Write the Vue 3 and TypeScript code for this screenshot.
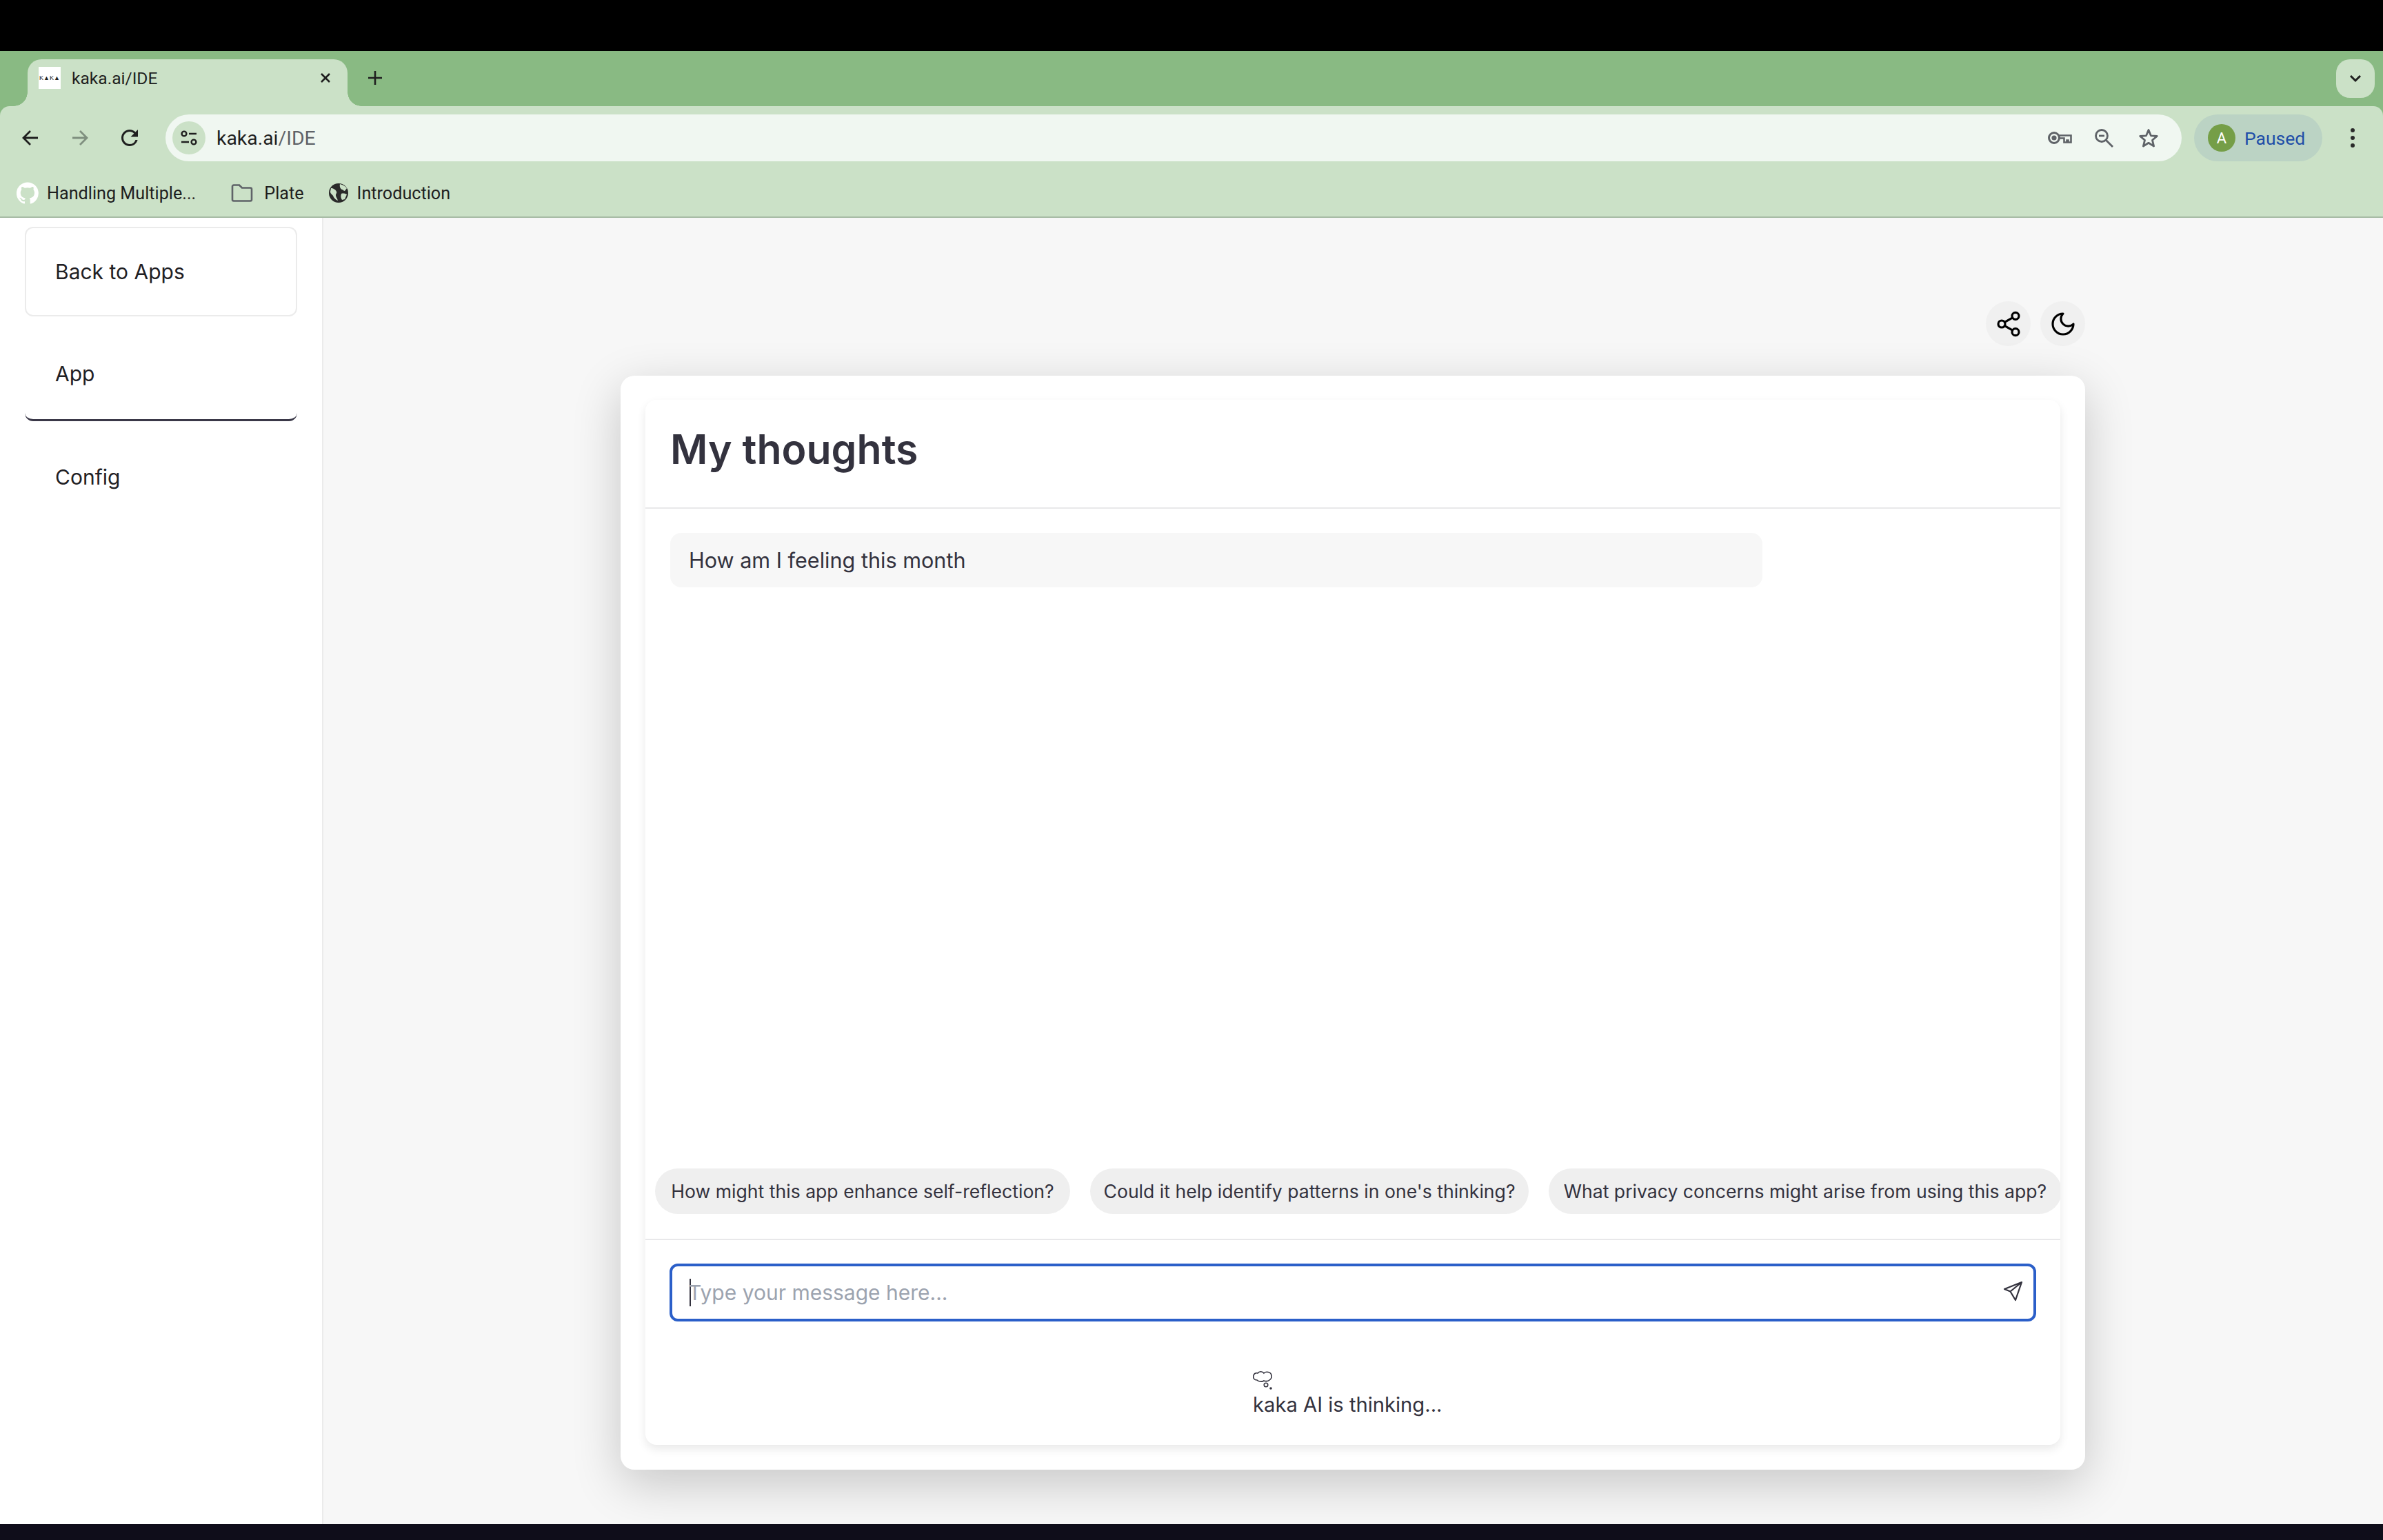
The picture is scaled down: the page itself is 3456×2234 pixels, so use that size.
<script setup lang="ts">
interface Suggestion {
  text: string
  width: number
}

const navItems: string[] = ['App', 'Config']
const suggestions: Suggestion[] = [
  { text: 'How might this app enhance self-reflection?', width: 602 },
  { text: "Could it help identify patterns in one's thinking?", width: 636 },
  { text: 'What privacy concerns might arise from using this app?', width: 744 },
]
</script>

<template>
  <div class="page">
    <div class="top-black"></div>

    <div class="tabstrip">
      <div class="tab">
        <span class="favicon">K▲K▲</span>
        <span class="tab-title">kaka.ai/IDE</span>
        <svg class="tab-close" width="16" height="16" viewBox="0 0 16 16"><path d="M2 2l12 12M14 2L2 14" stroke="#1f1f1f" stroke-width="2.6" fill="none"/></svg>
      </div>
      <svg class="new-tab" width="22" height="22" viewBox="0 0 22 22"><path d="M11 1v20M1 11h20" stroke="#1f1f1f" stroke-width="2.6" fill="none"/></svg>
      <div class="tab-menu">
        <svg width="18" height="12" viewBox="0 0 18 12"><path d="M2 2l7 7 7-7" stroke="#1f1f1f" stroke-width="3" fill="none"/></svg>
      </div>
    </div>

    <div class="toolbar">
      <div class="nav-row">
        <svg class="nav-icon" width="24" height="24" viewBox="0 0 24 24"><path d="M23 12H3M12 2L2 12l10 10" stroke="#1f1f1f" stroke-width="2.8" fill="none"/></svg>
        <svg class="nav-icon dim" width="24" height="24" viewBox="0 0 24 24"><path d="M1 12h20M12 2l10 10-10 10" stroke="#7f8f7f" stroke-width="2.8" fill="none"/></svg>
        <svg class="nav-icon" width="24" height="24" viewBox="4 4 16 16"><path fill="#1f1f1f" d="M17.65 6.35A7.958 7.958 0 0 0 12 4c-4.42 0-7.99 3.58-7.99 8s3.57 8 7.99 8c3.73 0 6.84-2.55 7.73-6h-2.08A5.99 5.99 0 0 1 12 18c-3.31 0-6-2.69-6-6s2.69-6 6-6c1.66 0 3.14.69 4.22 1.78L13 11h7V4l-2.35 2.35z"/></svg>
        <div class="omnibox">
          <span class="site-info">
            <svg width="24" height="22" viewBox="0 0 24 22"><circle cx="5" cy="5" r="3.4" stroke="#1f1f1f" stroke-width="2.4" fill="none"/><path d="M12 5h11M1 17h11" stroke="#1f1f1f" stroke-width="2.4"/><circle cx="19" cy="17" r="3.4" stroke="#1f1f1f" stroke-width="2.4" fill="none"/></svg>
          </span>
          <span class="url"><span class="url-host">kaka.ai</span><span class="url-path">/IDE</span></span>
          <span class="omni-icons">
            <svg width="36" height="20" viewBox="0 0 36 20"><circle cx="10" cy="10" r="7.5" stroke="#5f6368" stroke-width="3" fill="none"/><circle cx="10" cy="10" r="3.6" fill="#5f6368"/><path d="M17 6.5h17.5v10h-4v-3h-2v3h-4v-6H17" stroke="#5f6368" stroke-width="2.6" fill="none"/></svg>
            <svg class="zoom-icon" width="28" height="28" viewBox="0 0 28 28"><circle cx="11" cy="11" r="8.5" stroke="#5f6368" stroke-width="2.8" fill="none"/><path d="M7 11h8" stroke="#5f6368" stroke-width="2.8"/><path d="M17 17l10 10" stroke="#5f6368" stroke-width="2.8"/></svg>
            <svg width="30" height="30" viewBox="0 0 30 30"><path d="M15 3.5l3.4 8.3 8.9.7-6.8 5.8 2.1 8.7-7.6-4.7-7.6 4.7 2.1-8.7-6.8-5.8 8.9-.7z" stroke="#5f6368" stroke-width="2.8" fill="none" stroke-linejoin="round"/></svg>
          </span>
        </div>
        <div class="profile">
          <span class="avatar">A</span>
          <span class="paused">Paused</span>
        </div>
        <svg class="kebab" width="8" height="30" viewBox="0 0 8 30"><circle cx="4" cy="4" r="3" fill="#2a2a2a"/><circle cx="4" cy="15" r="3" fill="#2a2a2a"/><circle cx="4" cy="26" r="3" fill="#2a2a2a"/></svg>
      </div>

      <div class="bookmarks">
        <span class="bookmark first">
          <svg width="32" height="32" viewBox="0 0 24 24"><path fill="#fff" d="M12 .3a12 12 0 0 0-3.8 23.4c.6.1.8-.3.8-.6v-2c-3.3.7-4-1.6-4-1.6-.6-1.4-1.4-1.8-1.4-1.8-1-.7.1-.7.1-.7 1.2.1 1.8 1.2 1.8 1.2 1 1.8 2.8 1.3 3.5 1 .1-.8.4-1.3.8-1.6-2.7-.3-5.5-1.3-5.5-5.9 0-1.3.5-2.4 1.2-3.2-.1-.3-.5-1.5.1-3.2 0 0 1-.3 3.3 1.2a11.5 11.5 0 0 1 6 0c2.3-1.5 3.3-1.2 3.3-1.2.6 1.7.2 2.9.1 3.2.8.8 1.2 1.9 1.2 3.2 0 4.6-2.8 5.6-5.5 5.9.4.4.8 1.1.8 2.2v3.3c0 .3.2.7.8.6A12 12 0 0 0 12 .3"/></svg>
          <span class="bm-label">Handling Multiple...</span>
        </span>
        <span class="bookmark second">
          <svg width="32" height="28" viewBox="0 0 32 28"><path d="M2 4.5a2 2 0 0 1 2-2h8l4 4h12a2 2 0 0 1 2 2V23.5a2 2 0 0 1-2 2H4a2 2 0 0 1-2-2z" stroke="#5f6368" stroke-width="2.6" fill="none"/></svg>
          <span class="bm-label">Plate</span>
        </span>
        <span class="bookmark third">
          <svg width="30" height="30" viewBox="0 0 30 30"><circle cx="15" cy="15" r="14" fill="#2a2a2a"/><path d="M4 8c3 0 7 2 8 5 1 2-1 3-1 5 0 3 2 4 3 8-3-1-6-4-7-7-1-2-4-3-4-6zM17 2c4 1 8 3 10 6l-3 4c-2 0-2-2-4-2-2-1-4-4-3-8zM19 16c3-1 6 0 8 1l-3 7-4 1c-2-3-2-6-1-9z" fill="#cbe1c7"/></svg>
          <span class="bm-label">Introduction</span>
        </span>
      </div>
    </div>

    <div class="workspace">
      <aside class="sidebar">
        <div class="back-link">Back to Apps</div>
        <div
          v-for="(item, i) in navItems"
          :key="item"
          class="nav-item"
          :class="{ active: i === 0 }"
        >{{ item }}</div>
      </aside>

      <main class="content">
        <div class="actions">
          <button class="round-btn">
            <svg width="40" height="40" viewBox="0 0 24 24" fill="none" stroke="#000" stroke-width="1.9" stroke-linecap="round" stroke-linejoin="round"><circle cx="18" cy="5" r="3"/><circle cx="6" cy="12" r="3"/><circle cx="18" cy="19" r="3"/><path d="M8.59 13.51l6.83 3.98M15.41 6.51l-6.82 3.98"/></svg>
          </button>
          <button class="round-btn">
            <svg width="40" height="40" viewBox="0 0 24 24" fill="none" stroke="#000" stroke-width="1.9" stroke-linecap="round" stroke-linejoin="round"><path d="M12 3a6 6 0 0 0 9 9 9 9 0 1 1-9-9Z"/></svg>
          </button>
        </div>

        <section class="outer-card">
          <div class="chat-card">
            <header class="chat-header"><h1>My thoughts</h1></header>

            <div class="messages">
              <div class="bubble">How am I feeling this month</div>
            </div>

            <div class="suggestions">
              <span
                v-for="s in suggestions"
                :key="s.text"
                class="chip"
                :style="{ width: s.width + 'px' }"
              >{{ s.text }}</span>
            </div>

            <div class="composer">
              <div class="input">
                <span class="caret"></span>
                <span class="placeholder">Type your message here...</span>
                <svg class="send" width="30" height="30" viewBox="0 0 30 30"><path d="M28 2L3 12l8.5 3.5L19 28zM28 2L11.5 15.5" stroke="#33323e" stroke-width="2.2" fill="none" stroke-linejoin="round"/></svg>
              </div>
            </div>

            <div class="thinking">
              <svg class="cloud" width="28" height="28" viewBox="0 0 28 28"><path d="M7 4c2-3 7-3 9 0 3-3 10-2 11 3 1 3-1 6-3 7-2 2-6 2-8 1-3 2-8 1-10-1-4 0-6-3-5-6 0-3 3-5 6-4z" stroke="#33323e" stroke-width="1.6" fill="none"/><circle cx="19" cy="21" r="2.8" stroke="#33323e" stroke-width="1.5" fill="none"/><circle cx="26" cy="26" r="1.8" fill="#33323e"/></svg>
              <div class="thinking-text">kaka AI is thinking...</div>
            </div>
          </div>
        </section>
      </main>
    </div>

    <div class="bottom-bar"></div>
  </div>
</template>

<style>
html, body { margin: 0; padding: 0; background: #000; }
</style>

<style scoped>
.page {
  width: 3456px;
  height: 2234px;
  display: flex;
  flex-direction: column;
  overflow: hidden;
  background: #89ba83;
  font-family: "Inter", "Liberation Sans", sans-serif;
  color: #1f1f1f;
}
.top-black { height: 74px; background: #000; flex: none; }

/* Browser chrome */
.tabstrip {
  height: 80px;
  flex: none;
  background: #89ba83;
  display: flex;
  align-items: flex-start;
  padding: 12px 12px 0 40px;
  box-sizing: border-box;
}
.tab {
  position: relative;
  width: 464px;
  height: 68px;
  background: #cbe1c7;
  border-radius: 20px 20px 0 0;
  display: flex;
  align-items: center;
  padding: 0 24px 14px 16px;
  box-sizing: border-box;
}
.tab::before, .tab::after {
  content: "";
  position: absolute;
  bottom: 0;
  width: 20px;
  height: 20px;
  background: radial-gradient(circle at 100% 0, #89ba83 19.5px, #cbe1c7 20px);
}
.tab::after { right: -20px; }
.tab::before { left: -20px; transform: scaleX(-1); }
.favicon {
  width: 32px;
  height: 32px;
  background: #fff;
  font: 400 9px "Liberation Sans", sans-serif;
  color: #222;
  display: flex;
  align-items: center;
  justify-content: center;
  flex: none;
}
.tab-title {
  margin-left: 16px;
  font: 400 24.6px "Roboto", sans-serif;
  flex: 1;
  color: #1f1f1f;
}
.tab-close { flex: none; }
.new-tab { margin: 16px 0 0 29px; flex: none; }
.tab-menu {
  margin-left: auto;
  width: 56px;
  height: 56px;
  border-radius: 20px;
  background: #cbe1c7;
  display: flex;
  align-items: center;
  justify-content: center;
}
.toolbar {
  height: 162px;
  flex: none;
  box-sizing: border-box;
  background: #cbe1c7;
  border-bottom: 2px solid #a7bba5;
  border-radius: 14px 14px 0 0;
  padding-top: 12px;
}
.nav-row {
  display: flex;
  align-items: center;
  height: 68px;
  padding-left: 32px;
}
.nav-icon { flex: none; margin-right: 48px; }
.omnibox {
  margin-left: -8px;
  width: 2924px;
  height: 68px;
  border-radius: 34px;
  background: #f0f7f1;
  display: flex;
  align-items: center;
  padding: 0 33px 0 10px;
  box-sizing: border-box;
  flex: none;
}
.site-info {
  width: 48px;
  height: 48px;
  border-radius: 50%;
  background: #cbe1c7;
  display: flex;
  align-items: center;
  justify-content: center;
  flex: none;
}
.url { margin-left: 16px; font: 400 28.4px "Roboto", sans-serif; }
.url-host { color: #1f1f1f; }
.url-path { color: #5f6368; }
.omni-icons { margin-left: auto; display: flex; align-items: center; gap: 32px; }
.zoom-icon { margin-right: 4px; }
.profile {
  margin-left: 18px;
  width: 186px;
  height: 68px;
  border-radius: 34px;
  background: #bbd3c4;
  display: flex;
  align-items: center;
  padding-left: 20px;
  box-sizing: border-box;
  flex: none;
}
.avatar {
  width: 40px;
  height: 40px;
  border-radius: 50%;
  background: #759e47;
  color: #fff;
  font: 400 22px "Roboto", sans-serif;
  display: flex;
  align-items: center;
  justify-content: center;
}
.paused { margin-left: 13px; color: #1f4ea8; font: 400 26.5px "Roboto", sans-serif; }
.kebab { margin-left: 40px; flex: none; }
.bookmarks {
  display: flex;
  align-items: center;
  height: 36px;
  margin-top: 28px;
  padding-left: 24px;
  font: 400 25.2px "Roboto", sans-serif;
  color: #1f1f1f;
}
.bookmark { display: flex; align-items: center; }
.bm-label { margin-left: 12px; }
.bookmark.second { margin-left: 51px; }
.bookmark.second .bm-label { margin-left: 16px; }
.bookmark.third { margin-left: 35px; }

/* Application */
.workspace { flex: 1; min-height: 0; display: flex; }
.sidebar {
  width: 469px;
  flex: none;
  box-sizing: border-box;
  background: #fff;
  border-right: 2px solid #ebebeb;
  padding: 13px 36px 0;
  color: #1f2024;
  font-size: 30px;
}
.back-link, .nav-item {
  height: 130px;
  width: 395px;
  box-sizing: border-box;
  border-radius: 12px;
  padding-left: 44px;
  display: flex;
  align-items: center;
  margin-bottom: 20px;
}
.back-link { border: 2px solid #ebebeb; padding-left: 42px; }
.nav-item { padding-bottom: 4px; }
.nav-item.active {
  height: 132px;
  margin-bottom: 18px;
  border-bottom: 3px solid #3a3848;
}
.content {
  flex: 1;
  min-width: 0;
  background: #f7f7f7;
  display: flex;
  flex-direction: column;
  align-items: center;
  padding: 121px 1px 0 0;
  box-sizing: border-box;
}
.actions {
  width: 2124px;
  display: flex;
  justify-content: flex-end;
  gap: 14px;
}
.round-btn {
  width: 65px;
  height: 65px;
  border-radius: 50%;
  border: none;
  padding: 0;
  background: #f0f0f0;
  display: flex;
  align-items: center;
  justify-content: center;
}
.outer-card {
  margin-top: 43px;
  width: 2124px;
  height: 1587px;
  box-sizing: border-box;
  padding: 35px 36px 36px;
  background: #fff;
  border-radius: 20px;
  box-shadow: 0 20px 70px rgba(0, 0, 0, 0.2);
}
.chat-card {
  height: 100%;
  background: #fff;
  border-radius: 16px;
  box-shadow: 0 6px 14px rgba(0, 0, 0, 0.09);
  display: flex;
  flex-direction: column;
  color: #33323e;
}
.chat-header {
  height: 158px;
  flex: none;
  box-sizing: border-box;
  border-bottom: 2px solid #e8e8ea;
  padding: 0 0 14px 36px;
  display: flex;
  align-items: center;
}
.chat-header h1 {
  margin: 0;
  font-size: 59px;
  font-weight: 600;
  color: #33323e;
}
.messages { flex: 1; min-height: 0; padding: 35px 432px 0 36px; }
.bubble {
  height: 79px;
  background: #f7f7f7;
  border-radius: 16px;
  padding-left: 27px;
  display: flex;
  align-items: center;
  font-size: 30.6px;
}
.suggestions {
  display: flex;
  gap: 29px;
  padding-left: 14px;
  overflow: hidden;
  flex: none;
  height: 66px;
}
.chip {
  height: 66px;
  box-sizing: border-box;
  border-radius: 33px;
  background: #efefef;
  display: flex;
  align-items: center;
  justify-content: center;
  font-size: 26.6px;
  white-space: nowrap;
  flex: none;
}
.composer {
  margin-top: 36px;
  border-top: 2px solid #e8e8ea;
  padding: 34px 35px 0;
  flex: none;
}
.input {
  position: relative;
  height: 84px;
  box-sizing: border-box;
  border: 4px solid #2b5fc9;
  border-radius: 12px;
  background: #fff;
  display: flex;
  align-items: center;
  padding: 0 15px 0 25px;
}
.caret {
  width: 2px;
  height: 40px;
  background: #33323e;
  flex: none;
}
.placeholder { color: #9ca3af; font-size: 30px; margin-left: -4px; }
.send { margin-left: auto; flex: none; position: relative; top: -2px; }
.thinking { padding: 71px 0 38px 881px; flex: none; }
.cloud { display: block; }
.thinking-text { font-size: 29.2px; line-height: 40px; margin-top: 2px; }
.bottom-bar { height: 23px; background: #0f0d1a; flex: none; }
</style>
